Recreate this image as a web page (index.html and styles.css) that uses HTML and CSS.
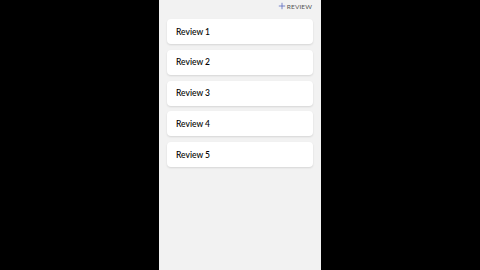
FILE: index.html
```html
<!DOCTYPE html>
<html lang="en">
<head>
    <meta charset="UTF-8">
    <meta name="viewport" content="width=device-width, initial-scale=1.0">
    <title>Reviews</title>
    <link rel="stylesheet" href="styles.css">
</head>
<body>
    <div class="app">
        <div class="toolbar">
            <button class="add-btn">
                <svg class="plus" viewBox="0 0 10 10" width="8" height="8">
                    <path d="M5 1v8M1 5h8" stroke="#5c6bc0" stroke-width="1" fill="none"/>
                </svg>
                <span>REVIEW</span>
            </button>
        </div>

        <div class="review-list">
            <div class="review-card">Review 1</div>
            <div class="review-card">Review 2</div>
            <div class="review-card">Review 3</div>
            <div class="review-card">Review 4</div>
            <div class="review-card">Review 5</div>
        </div>
    </div>
</body>
</html>
```

FILE: styles.css
```css
/* ======= CSS ======= */
html, body {
    height: 100%;
}

body {
    margin: 0;
    padding: 0;
    background: #000;
    font-family: Lato, "Open Sans", sans-serif;
}

.app {
    width: 162px;
    height: 100%;
    margin: 0 auto;
    background: #f2f2f2;
    box-sizing: border-box;
    padding: 0 8px 0 8px;
}

.toolbar {
    display: flex;
    justify-content: flex-end;
    height: 19px;
    align-items: flex-start;
}

.add-btn {
    display: flex;
    align-items: center;
    gap: 1px;
    background: transparent;
    border: none;
    padding: 2px 0 0 0;
    margin-right: 1px;
    font-family: inherit;
    font-size: 6.5px;
    color: #555;
    letter-spacing: 0.1px;
    cursor: pointer;
}

.review-list {
    display: flex;
    flex-direction: column;
    gap: 5.75px;
}

.review-card {
    height: 25px;
    display: flex;
    align-items: center;
    padding: 0 9px;
    background: #fff;
    border-radius: 4px;
    box-shadow: 0 1px 2px rgba(0, 0, 0, 0.12);
    font-size: 8.5px;
    font-weight: 500;
    color: #000;
}
```
